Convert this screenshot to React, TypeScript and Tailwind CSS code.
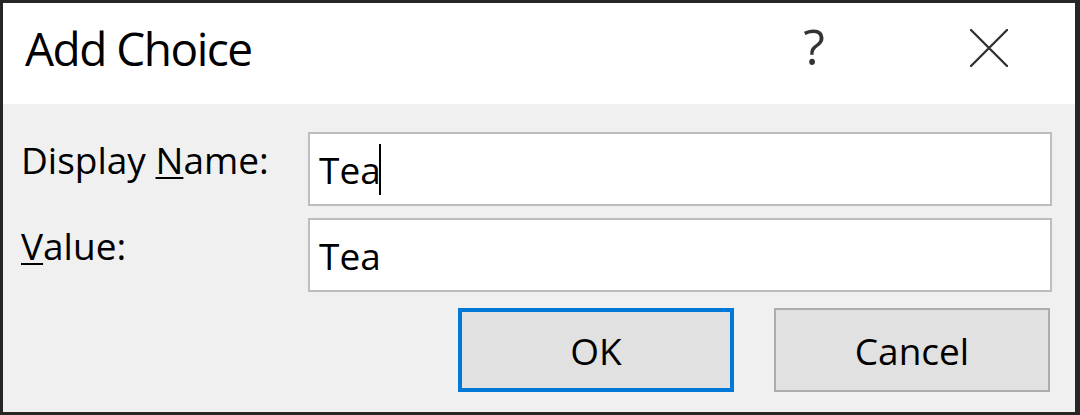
function Field({ value, caret }: { value: string; caret?: boolean }) {
  return (
    <div className="flex-1 h-[74px] bg-white border-2 border-[#bdbdbd] flex items-center pl-[9px] text-[37px] leading-none text-black">
      <span>{value}</span>
      {caret && <span className="w-[2px] h-[51px] bg-black ml-[-2px]" />}
    </div>
  );
}

function Button({ label, primary }: { label: string; primary?: boolean }) {
  return (
    <button
      className={
        primary
          ? "w-[276px] h-[84px] bg-[#e1e1e1] border-4 border-[#0078d7] text-[37px] leading-none text-black"
          : "w-[276px] h-[84px] bg-[#e1e1e1] border-2 border-[#adadad] text-[37px] leading-none text-black"
      }
    >
      {label}
    </button>
  );
}

export default function App() {
  return (
    <div
      className="w-[1080px] h-[415px] flex flex-col border-t-[3px] border-l-[3px] border-r-[5px] border-b-[3px] border-[#262626] text-black"
      style={{ fontFamily: '"Open Sans", "Noto Sans", sans-serif' }}
    >
      {/* Title bar */}
      <div className="h-[101px] bg-white flex items-start">
        <div className="pl-[22px] pt-[22px] text-[46px] leading-none tracking-[-1.5px]">Add Choice</div>
        <div className="ml-auto flex items-start pr-[67px]">
          <div className="w-[40px] mt-[18px] text-center text-[50px] leading-none text-[#333]">?</div>
          {/* close glyph */}
          <svg className="ml-[136px] mt-[26px]" width="38" height="38" viewBox="0 0 38 38" fill="none">
            <path d="M1 1L37 37M37 1L1 37" stroke="#333" strokeWidth="2.4" strokeLinecap="round" />
          </svg>
        </div>
      </div>

      {/* Body */}
      <div className="flex-1 bg-[#f0f0f0] pl-[18px] pr-[23px] pt-[28px] flex flex-col">
        <div className="flex items-start">
          <div className="w-[287px] mt-[9px] text-[37px] leading-none">
            Display <span className="underline decoration-2 underline-offset-[3px]">N</span>ame:
          </div>
          <Field value="Tea" caret />
        </div>
        <div className="flex items-start mt-[12px]">
          <div className="w-[287px] mt-[9px] text-[37px] leading-none">
            <span className="underline decoration-2 underline-offset-[3px]">V</span>alue:
          </div>
          <Field value="Tea" />
        </div>
        <div className="flex justify-end gap-[40px] mt-[16px] mr-[2px]">
          <Button label="OK" primary />
          <Button label="Cancel" />
        </div>
      </div>
    </div>
  );
}
